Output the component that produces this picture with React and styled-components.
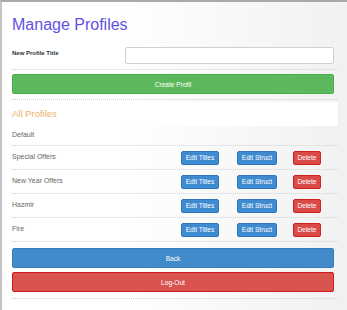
import React from "react";
import styled, { createGlobalStyle } from "styled-components";

const Global = createGlobalStyle`
  html, body { margin: 0; padding: 0; background: #fff; }
  body { font-family: "Liberation Sans", Arial, sans-serif; }
  * { box-sizing: border-box; }
`;

const Frame = styled.div`
  width: 347px;
  height: 310px;
  border-top: 2px solid #a9a9a9;
  border-left: 2px solid #c4c4c4;
  background: linear-gradient(to right, #ffffff 35%, #f1f1f1 100%);
  overflow: hidden;
`;

const Container = styled.div`
  width: 330px;
  margin-left: 6px;
  padding: 0 4px 8px 4px;
`;

const Title = styled.h1`
  margin: 0;
  padding: 12px 0 0 0;
  font-family: "Liberation Sans", Arial, sans-serif;
  font-weight: 400;
  font-size: 16px;
  line-height: 22px;
  color: #6152e0;
`;

const FormRow = styled.div`
  display: flex;
  align-items: flex-start;
  justify-content: space-between;
  padding: 11px 4px 5px 0;
  border-bottom: 1px dotted #cfcfcf;
  margin-right: -4px;
`;

const Label = styled.label`
  font-size: 6px;
  font-weight: 700;
  color: #333;
  padding-top: 3px;
`;

const Input = styled.input`
  width: 209px;
  height: 17px;
  border: 1px solid #d0d0d0;
  border-radius: 2px;
  background: #fff;
  outline: none;
`;

const FullButton = styled.button`
  display: block;
  width: 100%;
  height: 20px;
  border-radius: 2px;
  border: 1px solid ${(p) => p.$border};
  background: ${(p) => p.$bg};
  color: #fff;
  font-family: "Liberation Sans", Arial, sans-serif;
  font-size: 6.6px;
  padding: 0;
`;

const ButtonBlock = styled.div`
  padding: ${(p) => p.$pad};
  padding-right: 4px;
  border-bottom: 1px dotted #cfcfcf;
  display: flex;
  flex-direction: column;
  gap: 4px;
  margin-right: -4px;
`;

const SectionHead = styled.div`
  background: #fff;
  margin: 2px -4px 0 -4px;
  padding: 6px 4px 7px 4px;
  font-size: 9.5px;
  line-height: 11px;
  color: #eeb06a;
`;

const Row = styled.div`
  display: flex;
  align-items: center;
  height: ${(p) => p.$h}px;
  border-bottom: 1px dotted #cfcfcf;
  margin-right: -4px;
  padding-right: 4px;
`;

const Name = styled.span`
  flex: 1;
  font-size: 7px;
  color: #666;
  margin-top: -2px;
`;

const Actions = styled.div`
  display: grid;
  grid-template-columns: 56px 56px 28px;
  width: 148px;
  margin-right: 5px;
`;

const SmallButton = styled.button`
  width: ${(p) => p.$w}px;
  height: 14px;
  padding: 0;
  border-radius: 2px;
  border: 1px solid ${(p) => p.$border};
  background: ${(p) => p.$bg};
  color: #fff;
  font-family: "Liberation Sans", Arial, sans-serif;
  font-size: 6.6px;
`;

const profiles = ["Special Offers", "New Year Offers", "Hazmir", "Fire"];

export default function App() {
  return (
    <>
      <Global />
      <Frame>
        <Container>
          <Title>Manage Profiles</Title>
          <FormRow>
            <Label>New Profile Title</Label>
            <Input />
          </FormRow>
          <ButtonBlock $pad="4px 0 5px 0">
            <FullButton $bg="#5cb85c" $border="#4cae4c">Create Profil</FullButton>
          </ButtonBlock>
          <SectionHead>All Profiles</SectionHead>
          <Row $h={20}>
            <Name>Default</Name>
          </Row>
          {profiles.map((p) => (
            <Row key={p} $h={24}>
              <Name>{p}</Name>
              <Actions>
                <SmallButton $w={38} $bg="#3f8bd2" $border="#2f78bd">Edit Titles</SmallButton>
                <SmallButton $w={40} $bg="#3f8bd2" $border="#2f78bd">Edit Struct</SmallButton>
                <SmallButton $w={28} $bg="#dc4a48" $border="#cc2222">Delete</SmallButton>
              </Actions>
            </Row>
          ))}
          <ButtonBlock $pad="6px 0 6px 0">
            <FullButton $bg="#428bca" $border="#357ebd">Back</FullButton>
            <FullButton $bg="#d9534f" $border="#d21a1a">Log-Out</FullButton>
          </ButtonBlock>
        </Container>
      </Frame>
    </>
  );
}
